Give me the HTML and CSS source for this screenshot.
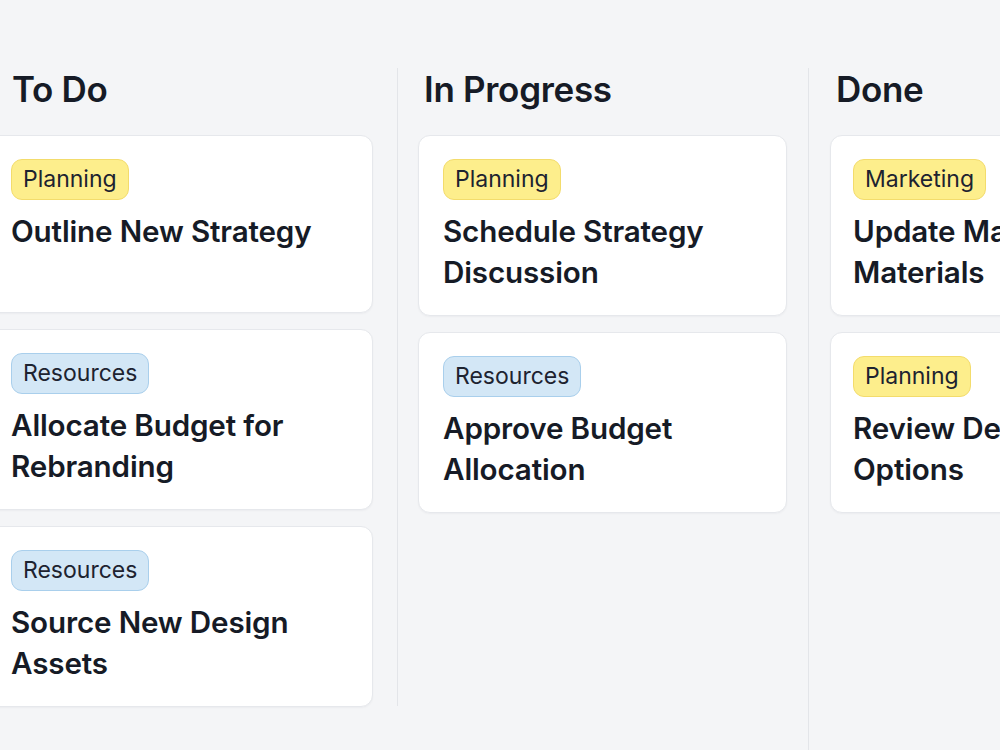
FILE: index.html
```html
<!DOCTYPE html>
<html lang="en">
<head>
  <meta charset="UTF-8">
  <meta name="viewport" content="width=device-width, initial-scale=1">
  <title>Board</title>
  <link rel="stylesheet" href="styles.css">
</head>
<body>

<div class="board">
  <!-- To Do -->
  <section class="column todo">
    <h2>To Do</h2>
    <div class="cards">
      <div class="card">
        <span class="tag yellow">Planning</span>
        <h3>Outline New Strategy</h3>
      </div>
      <div class="card">
        <span class="tag blue">Resources</span>
        <h3>Allocate Budget for Rebranding</h3>
      </div>
      <div class="card">
        <span class="tag blue">Resources</span>
        <h3>Source New Design Assets</h3>
      </div>
    </div>
  </section>

  <!-- In Progress -->
  <section class="column progress">
    <h2>In Progress</h2>
    <div class="cards">
      <div class="card">
        <span class="tag yellow">Planning</span>
        <h3>Schedule Strategy Discussion</h3>
      </div>
      <div class="card">
        <span class="tag blue">Resources</span>
        <h3>Approve Budget Allocation</h3>
      </div>
    </div>
  </section>

  <!-- Done -->
  <section class="column done">
    <h2>Done</h2>
    <div class="cards">
      <div class="card">
        <span class="tag yellow">Marketing</span>
        <h3>Update Marketing Materials</h3>
      </div>
      <div class="card">
        <span class="tag yellow">Planning</span>
        <h3>Review Design Options</h3>
      </div>
    </div>
  </section>
</div>

</body>
</html>
```

FILE: styles.css
```css
* { box-sizing: border-box; }
html, body { height: 100%; }
body {
  margin: 0;
  font-family: Inter, "Noto Sans", Arial, sans-serif;
  background: #f4f5f7;
  color: #161b26;
  overflow: hidden;
}

.board {
  display: flex;
  align-items: flex-start;
  margin-left: -14px;
  padding-top: 68px;
}

.column {
  flex-shrink: 0;
  width: 411px;
}

.column h2 {
  margin: 0 0 24px;
  font-size: 35px;
  line-height: 43px;
  font-weight: 600;
  letter-spacing: -0.3px;
}

.todo { padding: 0 24px 0 0; }
.todo h2 { padding-left: 26px; }

.progress {
  border-left: 1px solid #e3e5e9;
  padding: 0 21px 0 20px;
  min-height: 638px;
}

.done {
  border-left: 1px solid #e3e5e9;
  padding: 0 21px 0 21px;
  min-height: 700px;
}
.progress h2, .done h2 { padding-left: 6px; }
.done .card { padding-left: 22px; }

.cards {
  display: flex;
  flex-direction: column;
  gap: 16px;
}

.card {
  background: #fff;
  border: 1px solid #e6e8ec;
  border-radius: 12px;
  box-shadow: 0 1px 2px rgba(20,30,50,0.04);
  padding: 23px 24px 22px;
  min-height: 178px;
}

.tag {
  display: inline-block;
  font-size: 23px;
  line-height: 29px;
  padding: 5px 11px;
  border-radius: 11px;
  border: 1px solid transparent;
  color: #1d2330;
}
.tag.yellow { background: #fdee8c; border-color: #f3dc6c; }
.tag.blue { background: #d3e7f6; border-color: #a9cfec; }

.card h3 {
  margin: 11px 0 0;
  font-size: 29.6px;
  line-height: 41px;
  font-weight: 600;
  letter-spacing: -0.15px;
}
```
